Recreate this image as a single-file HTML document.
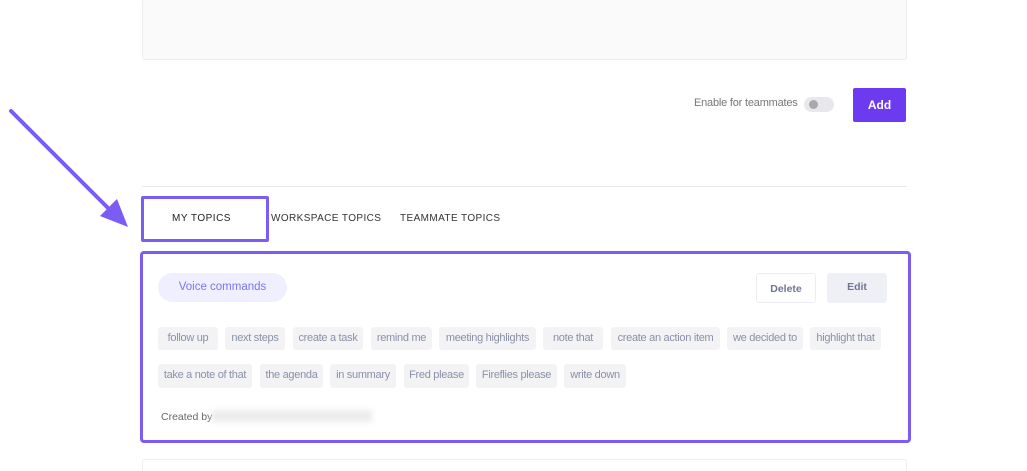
<!DOCTYPE html><html><head><style>
html,body{margin:0;width:1027px;height:471px;background:#fff;position:relative;overflow:hidden;font-family:"Liberation Sans",sans-serif}
.a{position:absolute}
.t{position:absolute;height:23px;line-height:23px;background:#f3f3f5;color:#8a90a8;font-size:11px;border-radius:3px;text-align:center;letter-spacing:-0.3px}
.r1{top:327px}.r2{top:364px;height:24px}
</style></head><body>
<div class="a" style="left:142px;top:-2px;width:763px;height:60px;background:#fafafa;border:1px solid #eee;border-radius:3px"></div>
<div class="a" style="left:694px;top:97px;font-size:11px;color:#777;letter-spacing:-0.2px">Enable for teammates</div>
<div class="a" style="left:804px;top:97px;width:30px;height:15px;border-radius:8px;background:#e8e8ec"></div>
<div class="a" style="left:809px;top:100px;width:9px;height:9px;border-radius:50%;background:#a8a8ad"></div>
<div class="a" style="left:853px;top:88px;width:53px;height:34px;background:#6c3bf0;border-radius:2px;color:#fff;font-weight:bold;font-size:12px;text-align:center;line-height:34px">Add</div>
<div class="a" style="left:142px;top:186px;width:765px;height:1px;background:#e8e8e8"></div>
<svg class="a" style="left:0;top:100px" width="140" height="135"><path d="M11 11 L110 110" stroke="#7b5cf5" stroke-width="4" stroke-linecap="round"/><polygon points="128,127 100,116 117,99" fill="#7b5cf5"/></svg>
<div class="a" style="left:141px;top:196px;width:122px;height:40px;border:3px solid #7b5cf5;border-radius:2px"></div>
<div class="a" style="left:172px;top:213px;font-size:10px;color:#222;letter-spacing:0.5px">MY TOPICS</div>
<div class="a" style="left:271px;top:213px;font-size:10px;color:#333;letter-spacing:0.4px">WORKSPACE TOPICS</div>
<div class="a" style="left:400px;top:213px;font-size:10px;color:#333;letter-spacing:0.4px">TEAMMATE TOPICS</div>
<div class="a" style="left:140px;top:251px;width:765px;height:186px;border:3px solid #7b5cf5;border-radius:4px"></div>
<div class="a" style="left:158px;top:273px;width:129px;height:29px;border-radius:15px;background:#efefff;color:#7f74f0;font-size:11.5px;text-align:center;line-height:29px">Voice commands</div>
<div class="a" style="left:756px;top:273px;width:58px;height:28px;border:1px solid #ececf2;border-radius:3px;color:#707592;font-size:10.5px;font-weight:bold;text-align:center;line-height:30px">Delete</div>
<div class="a" style="left:827px;top:273px;width:60px;height:30px;background:#eef0f6;border-radius:3px;color:#707592;font-size:10.5px;font-weight:bold;text-align:center;line-height:28px">Edit</div>
<div class="t r1" style="left:158px;width:60px">follow up</div>
<div class="t r1" style="left:225px;width:60px">next steps</div>
<div class="t r1" style="left:293px;width:70px">create a task</div>
<div class="t r1" style="left:371px;width:61px">remind me</div>
<div class="t r1" style="left:439px;width:97px">meeting highlights</div>
<div class="t r1" style="left:543px;width:60px">note that</div>
<div class="t r1" style="left:611px;width:109px">create an action item</div>
<div class="t r1" style="left:727px;width:76px">we decided to</div>
<div class="t r1" style="left:810px;width:71px">highlight that</div>
<div class="t r2" style="left:158px;width:94px">take a note of that</div>
<div class="t r2" style="left:260px;width:63px">the agenda</div>
<div class="t r2" style="left:330px;width:66px">in summary</div>
<div class="t r2" style="left:404px;width:65px">Fred please</div>
<div class="t r2" style="left:476px;width:81px">Fireflies please</div>
<div class="t r2" style="left:564px;width:62px">write down</div>
<div class="a" style="left:161px;top:411px;font-size:10.5px;color:#666">Created by</div>
<div class="a" style="left:212px;top:410px;width:160px;height:12px;background:#ececec;filter:blur(3px)"></div>
<div class="a" style="left:142px;top:459px;width:763px;height:20px;border:1px solid #eee;border-radius:3px"></div>
</body></html>
